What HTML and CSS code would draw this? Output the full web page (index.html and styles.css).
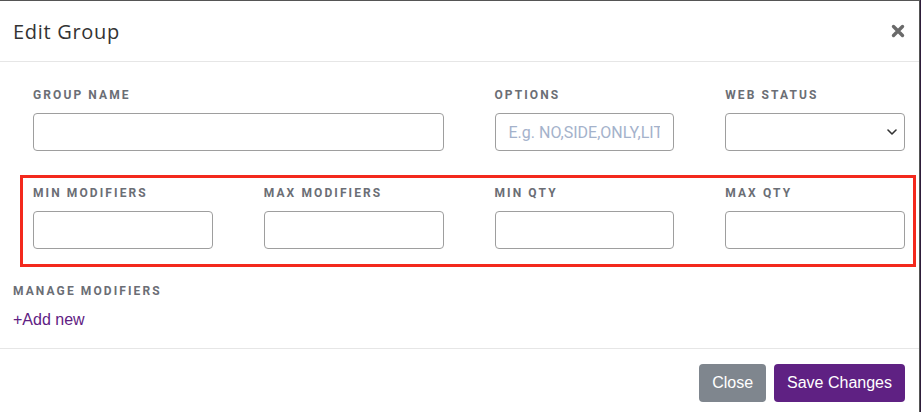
FILE: index.html
```html
<!DOCTYPE html>
<html lang="en">
<head>
<meta charset="utf-8">
<title>Edit Group</title>
<link rel="stylesheet" href="styles.css">
</head>
<body>
<div class="modal">
  <div class="modal-header">
    <h5 class="modal-title">Edit Group</h5>
    <button class="close-x" aria-label="Close">
      <svg width="14" height="14" viewBox="0 0 14 14"><path d="M2.5 2.5 L11.5 11.5 M11.5 2.5 L2.5 11.5" stroke="#6a6a6a" stroke-width="3.4" stroke-linecap="round" fill="none"/></svg>
    </button>
  </div>
  <div class="modal-body">
    <div class="row row-first">
      <div class="field span-2">
        <label class="lbl">Group Name</label>
        <input class="ctl" type="text">
      </div>
      <div class="field">
        <label class="lbl">Options</label>
        <input class="ctl" type="text" placeholder="E.g. NO,SIDE,ONLY,LITE">
      </div>
      <div class="field">
        <label class="lbl">Web Status</label>
        <div class="select-wrap">
          <select class="ctl sel"><option></option></select>
          <svg class="chev" width="10" height="6" viewBox="0 0 10 6"><path d="M1 1 L5 5 L9 1" stroke="#333" stroke-width="1.6" fill="none" stroke-linecap="round" stroke-linejoin="round"/></svg>
        </div>
      </div>
    </div>
    <div class="row row-marked">
      <div class="field">
        <label class="lbl">Min Modifiers</label>
        <input class="ctl" type="text">
      </div>
      <div class="field">
        <label class="lbl">Max Modifiers</label>
        <input class="ctl" type="text">
      </div>
      <div class="field">
        <label class="lbl">Min Qty</label>
        <input class="ctl" type="text">
      </div>
      <div class="field">
        <label class="lbl">Max Qty</label>
        <input class="ctl" type="text">
      </div>
    </div>
    <div class="lbl manage">Manage Modifiers</div>
    <a class="add-new" href="#">+Add new</a>
  </div>
  <div class="modal-footer">
    <button class="btn btn-close">Close</button>
    <button class="btn btn-save">Save Changes</button>
  </div>
</div>
</body>
</html>
```

FILE: styles.css
```css
html, body {
  margin: 0;
  padding: 0;
}
body {
  background: #2e1d3a;
  height: 412px;
  overflow: hidden;
  font-family: "Liberation Sans", Arial, sans-serif;
}
.modal {
  width: 919px;
  height: 411px;
  background: #fff;
  border-top: 1px solid #555;
  border-right: 1px solid #555;
}
.modal-header {
  height: 60px;
  border-bottom: 1px solid #e6e6e6;
  display: flex;
  align-items: center;
  justify-content: space-between;
  padding: 0 14px 0 13px;
}
.modal-title {
  margin: 0;
  font-family: "Open Sans", sans-serif;
  font-weight: 400;
  font-size: 20px;
  color: #333;
  letter-spacing: 0.7px;
}
.close-x {
  border: 0;
  background: none;
  padding: 0;
  width: 14px;
  height: 14px;
  display: flex;
}
.modal-body {
  padding: 25px 13px 16px 13px;
}
.row {
  display: grid;
  grid-template-columns: repeat(4, 1fr);
  column-gap: 51px;
  width: 872px;
}
.row-first {
  margin-left: 20px;
}
.row-marked {
  margin-top: 24px;
  margin-left: 7px;
  border: 3px solid #f3291d;
  padding: 7px 8px 15px 10px;
}
.span-2 {
  grid-column: span 2;
}
.field {
  display: flex;
  flex-direction: column;
}
.lbl {
  display: block;
  font-family: Roboto, "Liberation Sans", sans-serif;
  font-weight: 700;
  font-size: 12px;
  line-height: 16px;
  letter-spacing: 2.1px;
  text-transform: uppercase;
  color: #6b6e75;
  margin-bottom: 10px;
}
.ctl {
  box-sizing: border-box;
  height: 38px;
  width: 100%;
  border: 1px solid #9e9e9e;
  border-radius: 4px;
  background: #fff;
  padding: 0 13px;
  font-family: Roboto, sans-serif;
  font-size: 16px;
  color: #333;
  margin: 0;
}
.ctl::placeholder {
  color: #a4b2cb;
}
.select-wrap {
  position: relative;
}
.sel {
  appearance: none;
  -webkit-appearance: none;
}
.chev {
  position: absolute;
  right: 8px;
  top: 16px;
  pointer-events: none;
}
.manage {
  margin-top: 16px;
  margin-bottom: 0;
}
.add-new {
  display: block;
  margin-top: 9px;
  font-size: 16px;
  line-height: 24px;
  color: #5f2183;
  text-decoration: none;
}
.modal-footer {
  border-top: 1px solid #e6e6e6;
  padding: 15px 14px 0 0;
  display: flex;
  justify-content: flex-end;
  gap: 8px;
}
.btn {
  height: 38px;
  border: 1px solid transparent;
  border-radius: 4px;
  padding: 0 12px;
  font-family: "Liberation Sans", Arial, sans-serif;
  font-size: 16px;
  color: #fff;
}
.btn-close {
  background: #7f868e;
}
.btn-save {
  background: #5f2183;
}
```
